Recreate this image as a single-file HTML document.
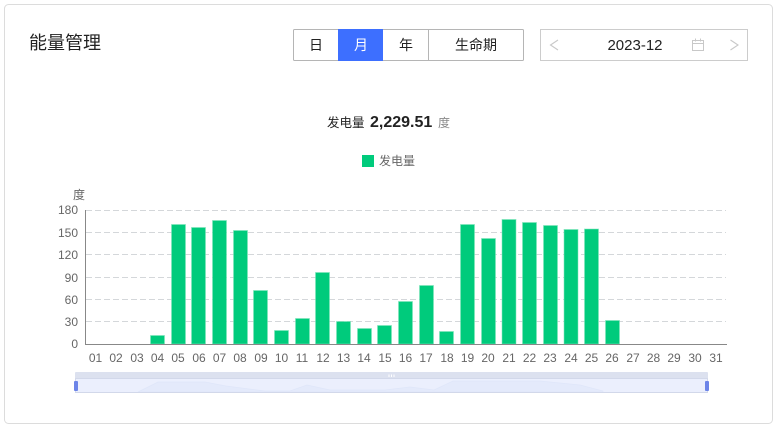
<!DOCTYPE html>
<html lang="zh">
<head>
<meta charset="utf-8">
<style>
html,body{margin:0;padding:0;background:#fff;}
body{width:780px;height:429px;overflow:hidden;position:relative;}
svg{display:block;position:absolute;left:0;top:0;}
text{font-family:"Liberation Sans","Noto Sans CJK SC",sans-serif;}
</style>
</head>
<body>
<svg width="780" height="429" viewBox="0 0 780 429" xmlns="http://www.w3.org/2000/svg">
<rect x="4.5" y="4.5" width="768" height="419" rx="4" fill="#fff" stroke="#dcdcdc"/>
<text x="29" y="49" font-size="18" fill="#222">能量管理</text>

<!-- segmented control -->
<rect x="293.5" y="29.5" width="230" height="31" rx="1" fill="#fff" stroke="#b5b5b5"/>
<rect x="338" y="29" width="45" height="32" fill="#3d6fff"/>
<line x1="428.5" y1="30" x2="428.5" y2="60" stroke="#b5b5b5"/>
<text x="316" y="50" font-size="14" fill="#222" text-anchor="middle">日</text>
<text x="361" y="50" font-size="14" fill="#fff" text-anchor="middle">月</text>
<text x="406" y="50" font-size="14" fill="#222" text-anchor="middle">年</text>
<text x="476" y="50" font-size="14" fill="#222" text-anchor="middle">生命期</text>

<!-- date picker -->
<rect x="540.5" y="29.5" width="207" height="31" fill="#fff" stroke="#cccccc"/>
<path d="M558 40L550.5 45L558 50" fill="none" stroke="#c8c8c8" stroke-width="1.1"/>
<path d="M730.5 40L738 45L730.5 50" fill="none" stroke="#c8c8c8" stroke-width="1.1"/>
<text x="635" y="50" font-size="15" fill="#222" text-anchor="middle">2023-12</text>
<g fill="none" stroke="#c8c8c8" stroke-width="1">
<rect x="692.5" y="40.5" width="11" height="10"/>
<path d="M692.5 43.5H703.5M695.5 38.5V41.5M700.5 38.5V41.5"/>
</g>

<!-- title -->
<text x="327" y="127" font-size="12.5" fill="#222">发电量</text>
<text x="370" y="127" font-size="16" font-weight="700" fill="#222">2,229.51</text>
<text x="438" y="127" font-size="12" fill="#888">度</text>

<!-- legend -->
<rect x="362" y="155" width="12" height="12" fill="#00cb7c"/>
<text x="379" y="165" font-size="12" fill="#666">发电量</text>

<!-- axis name -->
<text x="73" y="199" font-size="12" fill="#666">度</text>

<!-- grid -->
<g stroke="#d4d7da" stroke-width="1" stroke-dasharray="6 3">
<line x1="86" y1="210.5" x2="726" y2="210.5"/>
<line x1="86" y1="232.5" x2="726" y2="232.5"/>
<line x1="86" y1="254.5" x2="726" y2="254.5"/>
<line x1="86" y1="277.5" x2="726" y2="277.5"/>
<line x1="86" y1="299.5" x2="726" y2="299.5"/>
<line x1="86" y1="321.5" x2="726" y2="321.5"/>
</g>

<!-- y labels -->
<g font-size="12" fill="#666" text-anchor="end">
<text x="78" y="214">180</text>
<text x="78" y="237">150</text>
<text x="78" y="259">120</text>
<text x="78" y="282">90</text>
<text x="78" y="304">60</text>
<text x="78" y="326">30</text>
<text x="78" y="348">0</text>
</g>

<!-- bars -->
<g fill="#00cb7c" stroke="#7fe5bc" stroke-opacity=".55" stroke-width="1">
<rect x="150.5" y="335.5" width="14" height="8.5"/>
<rect x="171.5" y="224.5" width="14" height="119.5"/>
<rect x="191.5" y="227.5" width="14" height="116.5"/>
<rect x="212.5" y="220.5" width="14" height="123.5"/>
<rect x="233.5" y="230.5" width="14" height="113.5"/>
<rect x="253.5" y="290.5" width="14" height="53.5"/>
<rect x="274.5" y="330.5" width="14" height="13.5"/>
<rect x="295.5" y="318.5" width="14" height="25.5"/>
<rect x="315.5" y="272.5" width="14" height="71.5"/>
<rect x="336.5" y="321.5" width="14" height="22.5"/>
<rect x="357.5" y="328.5" width="14" height="15.5"/>
<rect x="377.5" y="325.5" width="14" height="18.5"/>
<rect x="398.5" y="301.5" width="14" height="42.5"/>
<rect x="419.5" y="285.5" width="14" height="58.5"/>
<rect x="439.5" y="331.5" width="14" height="12.5"/>
<rect x="460.5" y="224.5" width="14" height="119.5"/>
<rect x="481.5" y="238.5" width="14" height="105.5"/>
<rect x="502" y="219.5" width="14" height="124.5"/>
<rect x="522.5" y="222.5" width="14" height="121.5"/>
<rect x="543.5" y="225.5" width="14" height="118.5"/>
<rect x="564" y="229.5" width="14" height="114.5"/>
<rect x="584.5" y="229" width="14" height="115"/>
<rect x="605.5" y="320.5" width="14" height="23.5"/>
</g>

<!-- axes -->
<line x1="85.5" y1="210" x2="85.5" y2="344" stroke="#888"/>
<line x1="85" y1="344.5" x2="727" y2="344.5" stroke="#888"/>

<!-- x labels -->
<g font-size="12" fill="#666" text-anchor="middle">
<text x="95.5" y="362">01</text><text x="116" y="362">02</text><text x="137" y="362">03</text><text x="157.5" y="362">04</text><text x="178" y="362">05</text><text x="199" y="362">06</text><text x="219.5" y="362">07</text><text x="240" y="362">08</text><text x="261" y="362">09</text><text x="281.5" y="362">10</text><text x="302" y="362">11</text><text x="323" y="362">12</text><text x="343.5" y="362">13</text><text x="364" y="362">14</text><text x="385" y="362">15</text><text x="405.5" y="362">16</text><text x="426" y="362">17</text><text x="447" y="362">18</text><text x="467.5" y="362">19</text><text x="488" y="362">20</text><text x="509" y="362">21</text><text x="529.5" y="362">22</text><text x="550" y="362">23</text><text x="571" y="362">24</text><text x="591.5" y="362">25</text><text x="612" y="362">26</text><text x="633" y="362">27</text><text x="653.5" y="362">28</text><text x="674" y="362">29</text><text x="695" y="362">30</text><text x="716" y="362">31</text>
</g>

<!-- dataZoom -->
<rect x="75" y="372" width="633" height="7" rx="1" fill="#dce1ef"/>
<rect x="75.5" y="379" width="632" height="13" fill="#ebeffd"/>
<path d="M138 392L158 382H205L226 386L265 391H290L307 385L330 390H385L410 387L434 390L453 381H540L580 385L603 391V392Z" fill="#e4eafb" stroke="#dfe6f9" stroke-width=".7"/>
<rect x="75.5" y="378.5" width="632" height="14" fill="none" stroke="#d2d8ea"/>
<path d="M389 374.5V377M391.5 374.5V377M394 374.5V377" stroke="#fff" stroke-width="1"/>
<rect x="74" y="381" width="4" height="10" rx="1" fill="#6c84e8"/>
<rect x="705" y="381" width="4" height="10" rx="1" fill="#6c84e8"/>
</svg>
</body>
</html>
